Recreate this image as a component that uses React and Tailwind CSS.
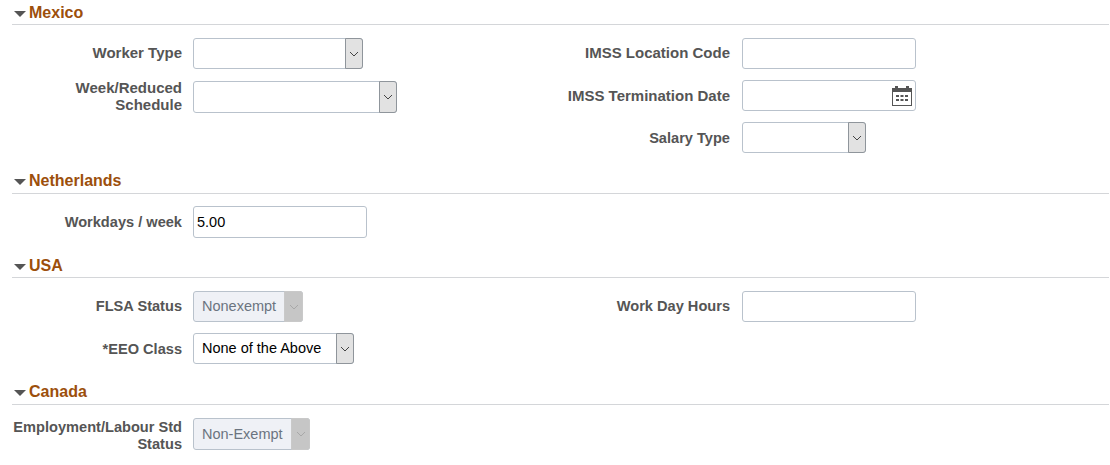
const ChevronBtn = ({ disabled }) => (
    <div
        className={
            disabled
                ? "-my-px -mr-px flex w-[19px] items-center justify-center rounded-r-[3px] border border-[#c9c9c9] bg-[#c6c6c6]"
                : "-my-px -mr-px flex w-[18px] items-center justify-center rounded-r-[3px] border border-[#8f959b] bg-[#e2e2e2]"
        }
    >
        <svg width="10" height="6" viewBox="0 0 10 6" fill="none">
            <path
                d="M1 1 L5 5 L9 1"
                stroke={disabled ? "#a8a8a8" : "#444"}
                strokeWidth="1"
            />
        </svg>
    </div>
);

const Select = ({ width, height = "h-[31px]", lead = "leading-[29px]", value, disabled }) => (
    <div
        className={`flex ${width} ${height} shrink-0 justify-between rounded-[3px] border border-[#b9c2cc] ${
            disabled ? "bg-[#eff1f6] text-[#6b7480]" : "bg-white text-black"
        }`}
    >
        <span className={`pl-2 text-[14.5px] ${lead}`}>{value}</span>
        <ChevronBtn disabled={disabled} />
    </div>
);

const Input = ({ width, height = "h-[31px]", value, children }) => (
    <div
        className={`flex ${width} ${height} shrink-0 items-center justify-between rounded-[3px] border border-[#b9c2cc] bg-white text-[14.5px] text-black`}
    >
        <span className="pl-[3px] pt-[2px]">{value}</span>
        {children}
    </div>
);

const Label = ({ children, width = "w-[170px] mr-[11px]", shift = "mt-0", size = "text-[14.6px]" }) => (
    <div
        className={`${width} ${shift} ${size} shrink-0 text-right leading-[17px] font-bold text-[#555555]`}
    >
        {children}
    </div>
);

const Section = ({ title, tight, children }) => (
    <div>
        <div className={`flex h-[25px] items-center border-b border-[#d4d6d9] ${tight ? "pt-0" : "pt-[2px]"}`}>
            <svg width="15" height="7" viewBox="0 0 15 7" className="ml-[2px] mt-[2px] shrink-0">
                <path d="M0 0 H12 L6 6 Z" fill="#555555" />
            </svg>
            <span className="text-[16px] font-bold text-[#9c4f0c]">{title}</span>
        </div>
        {children}
    </div>
);

const Calendar = () => (
    <svg width="22" height="22" viewBox="0 0 22 22" className="mr-[2px]">
        <rect x="1.5" y="3.5" width="19" height="17" fill="none" stroke="#555" />
        <rect x="1" y="3" width="20" height="4" fill="#555" />
        <rect x="4" y="1" width="3" height="3" fill="#555" />
        <rect x="15" y="1" width="3" height="3" fill="#555" />
        <path
            d="M5 10h3v2H5zM9.5 10h3v2h-3zM14 10h3v2h-3zM5 14h3v2H5zM9.5 14h3v2h-3zM14 14h3v2h-3z"
            fill="#555"
        />
    </svg>
);

const App = () => {
    return (
        <div
            className="h-[465px] w-[1110px] overflow-hidden bg-white pl-3 pr-px"
            style={{ fontFamily: '"Liberation Sans", Arial, sans-serif' }}
        >
            <Section title="Mexico">
                <div className="flex pt-[13px]">
                    <div className="w-[537px]">
                        <div className="flex items-center">
                            <Label size="text-[15px]" shift="-mt-[2px]">Worker Type</Label>
                            <Select width="w-[170px]" />
                        </div>
                        <div className="mt-3 flex h-[32px] items-center">
                            <Label size="text-[15px]" shift="-mt-[2px]">Week/Reduced Schedule</Label>
                            <Select width="w-[204px]" height="h-[32px]" />
                        </div>
                    </div>
                    <div className="flex flex-col gap-[11px]">
                        <div className="flex items-center">
                            <Label width="w-[181px] mr-[12px]" size="text-[15px]" shift="-mt-[2px]">
                                IMSS Location Code
                            </Label>
                            <Input width="w-[174px]" />
                        </div>
                        <div className="flex items-center">
                            <Label width="w-[181px] mr-[12px]" size="text-[15px]">
                                IMSS Termination Date
                            </Label>
                            <Input width="w-[174px]">
                                <Calendar />
                            </Input>
                        </div>
                        <div className="flex items-center">
                            <Label width="w-[181px] mr-[12px]" shift="mt-[2px]">Salary Type</Label>
                            <Select width="w-[124px]" />
                        </div>
                    </div>
                </div>
            </Section>

            <div className="mt-[16px]">
                <Section title="Netherlands" tight>
                    <div className="flex items-center pt-[12px]">
                        <Label>Workdays / week</Label>
                        <Input width="w-[174px]" height="h-[32px]" value="5.00" />
                    </div>
                </Section>
            </div>

            <div className="mt-[15px]">
                <Section title="USA">
                    <div className="flex pt-[13px]">
                        <div className="w-[537px]">
                            <div className="flex items-center">
                                <Label>FLSA Status</Label>
                                <Select width="w-[110px]" value="Nonexempt" disabled />
                            </div>
                            <div className="mt-[11px] flex items-center">
                                <Label shift="mt-[2px]">*EEO Class</Label>
                                <Select width="w-[161px]" value="None of the Above" />
                            </div>
                        </div>
                        <div className="flex h-[31px] items-center">
                            <Label width="w-[181px] mr-[12px]">Work Day Hours</Label>
                            <Input width="w-[174px]" />
                        </div>
                    </div>
                </Section>
            </div>

            <div className="mt-[16px]">
                <Section title="Canada" tight>
                    <div className="pt-[13px]">
                        <div className="flex h-[32px] items-center">
                            <Label shift="mt-[4px]">Employment/Labour Std Status</Label>
                            <Select
                                width="w-[117px]"
                                height="h-[32px]"
                                lead="leading-[31px]"
                                value="Non-Exempt"
                                disabled
                            />
                        </div>
                    </div>
                </Section>
            </div>
        </div>
    );
};

export default App;
